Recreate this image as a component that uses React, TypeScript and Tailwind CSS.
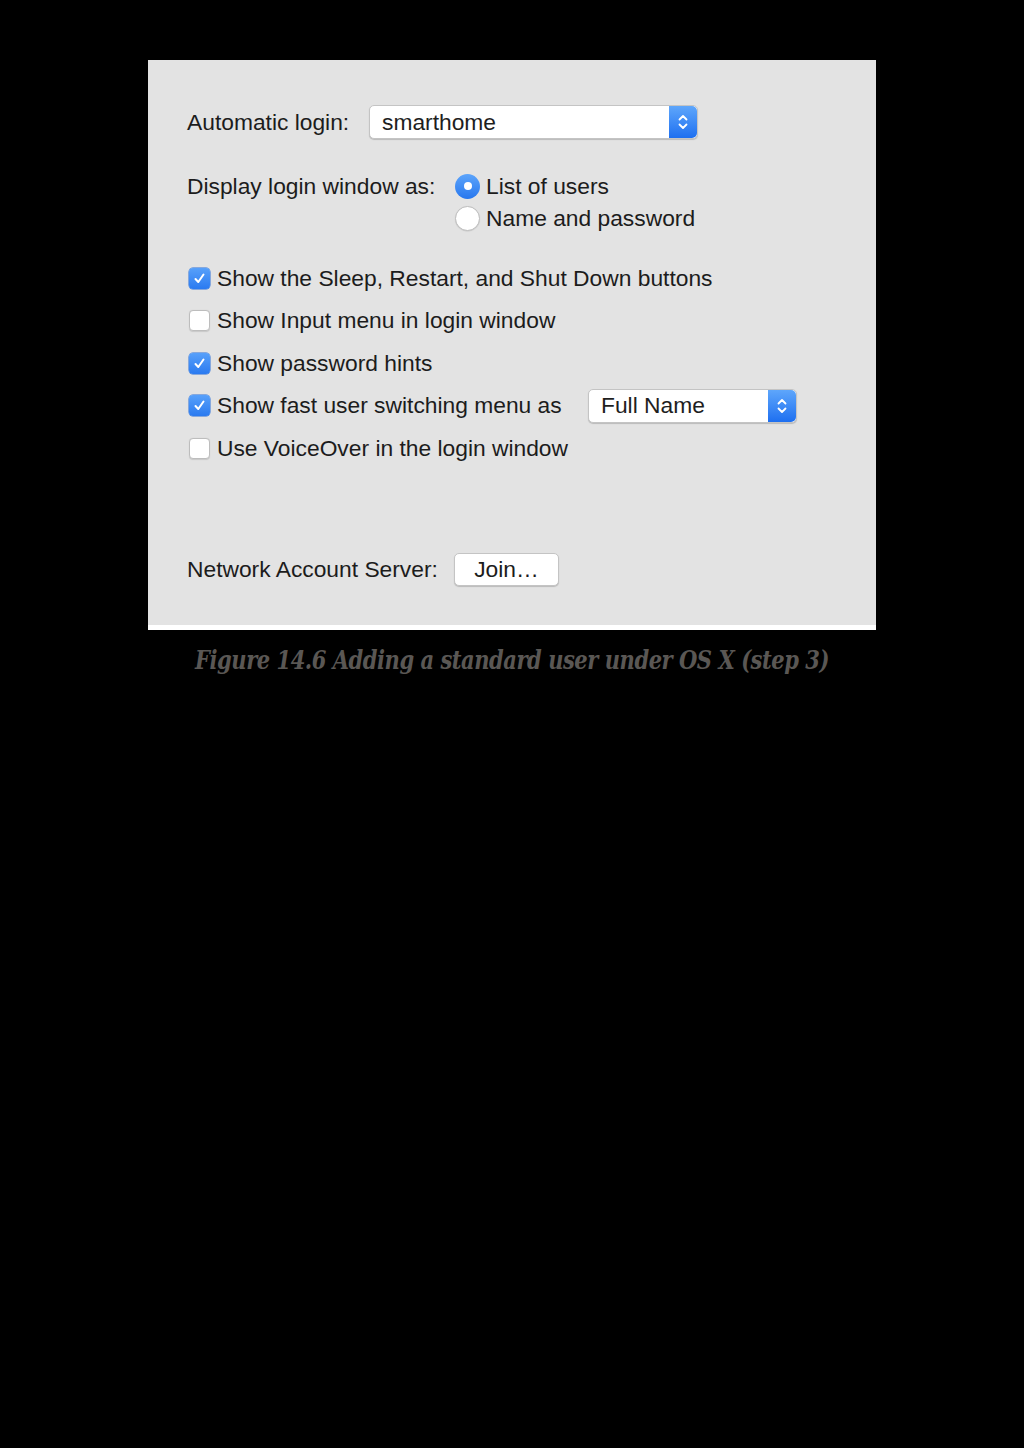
import React from "react";

const sans = { fontFamily: '"Liberation Sans", Arial, sans-serif' };

function Stepper() {
  return (
    <div className="h-full w-[28px] rounded-r-[5px] bg-gradient-to-b from-[#5ea6fb] to-[#1d6ff0] flex items-center justify-center">
      <svg width="12" height="20" viewBox="0 0 12 20" fill="none" stroke="white" strokeWidth="1.8" strokeLinecap="round" strokeLinejoin="round">
        <polyline points="2.5,7.5 6,4 9.5,7.5" />
        <polyline points="2.5,12.5 6,16 9.5,12.5" />
      </svg>
    </div>
  );
}

function Popup({ label, width }: { label: string; width: string }) {
  return (
    <div className={`${width} h-[34px] flex items-stretch rounded-[5px] bg-white border border-[#c4c4c4] shadow-[0_1px_1px_rgba(0,0,0,0.18)]`}>
      <div className="flex-1 flex items-center pl-[12px] text-[#1e1e1e]">{label}</div>
      <Stepper />
    </div>
  );
}

function Checkbox({ checked }: { checked: boolean }) {
  return checked ? (
    <div className="w-[21px] h-[21px] rounded-[4px] bg-gradient-to-b from-[#57a0fa] to-[#2a7af0] flex items-center justify-center shadow-[0_0_0_0.5px_#2a6fd8]">
      <svg width="15" height="15" viewBox="0 0 15 15" fill="none" stroke="white" strokeWidth="2" strokeLinecap="round" strokeLinejoin="round">
        <polyline points="3.5,8 6.3,11 11.5,3.5" />
      </svg>
    </div>
  ) : (
    <div className="w-[21px] h-[21px] rounded-[4px] bg-white border border-[#bdbdbd] shadow-[0_0.5px_1px_rgba(0,0,0,0.12)]" />
  );
}

function Radio({ selected }: { selected: boolean }) {
  return selected ? (
    <div className="w-[25px] h-[25px] rounded-full bg-gradient-to-b from-[#5ca4fb] to-[#2777ee] flex items-center justify-center">
      <div className="w-[8px] h-[8px] rounded-full bg-white" />
    </div>
  ) : (
    <div className="w-[25px] h-[25px] rounded-full bg-white border border-[#bdbdbd] shadow-[0_0.5px_1px_rgba(0,0,0,0.12)]" />
  );
}

function CheckRow({ checked, label, children }: { checked: boolean; label: string; children?: React.ReactNode }) {
  return (
    <div className="h-[42.5px] flex items-center">
      <div className="ml-[2px]">
        <Checkbox checked={checked} />
      </div>
      <span className={children ? "ml-[7px] w-[371px]" : "ml-[7px]"}>{label}</span>
      {children}
    </div>
  );
}

export default function App() {
  return (
    <div className="w-[1024px] h-[1448px] bg-black" style={sans}>
      <div className="pt-[60px] pl-[148px]">
        <div className="w-[728px] h-[570px] bg-[#e3e3e3] border-b-[5px] border-white pl-[39px] pt-[45px] text-[22.8px] text-[#1c1c1c] leading-none">
          <div className="h-[34px] flex items-center">
            <span className="w-[182px]">Automatic login:</span>
            <Popup label="smarthome" width="w-[329px]" />
          </div>

          <div className="mt-[31px] flex">
            <span className="w-[268px] h-[32px] flex items-center">Display login window as:</span>
            <div className="flex flex-col">
              <div className="h-[32px] flex items-center">
                <Radio selected />
                <span className="ml-[6px]">List of users</span>
              </div>
              <div className="h-[32px] flex items-center">
                <Radio selected={false} />
                <span className="ml-[6px]">Name and password</span>
              </div>
            </div>
          </div>

          <div className="mt-[23px] flex flex-col">
            <CheckRow checked label="Show the Sleep, Restart, and Shut Down buttons" />
            <CheckRow checked={false} label="Show Input menu in login window" />
            <CheckRow checked label="Show password hints" />
            <CheckRow checked label="Show fast user switching menu as">
              <Popup label="Full Name" width="w-[209px]" />
            </CheckRow>
            <CheckRow checked={false} label="Use VoiceOver in the login window" />
          </div>

          <div className="mt-[83px] h-[34px] flex items-center">
            <span className="w-[267px]">Network Account Server:</span>
            <div className="w-[105px] h-[33px] rounded-[5px] bg-white border border-[#c4c4c4] shadow-[0_1px_1px_rgba(0,0,0,0.18)] flex items-center justify-center">
              Join…
            </div>
          </div>
        </div>
      </div>
      <div
        className="w-[1024px] text-center mt-[11px] text-[26px] font-bold italic text-[#5a5754] tracking-[-0.6px] scale-x-[0.81]"
        style={{ fontFamily: '"DejaVu Serif", serif' }}
      >
        Figure 14.6 Adding a standard user under OS X (step 3)
      </div>
    </div>
  );
}
